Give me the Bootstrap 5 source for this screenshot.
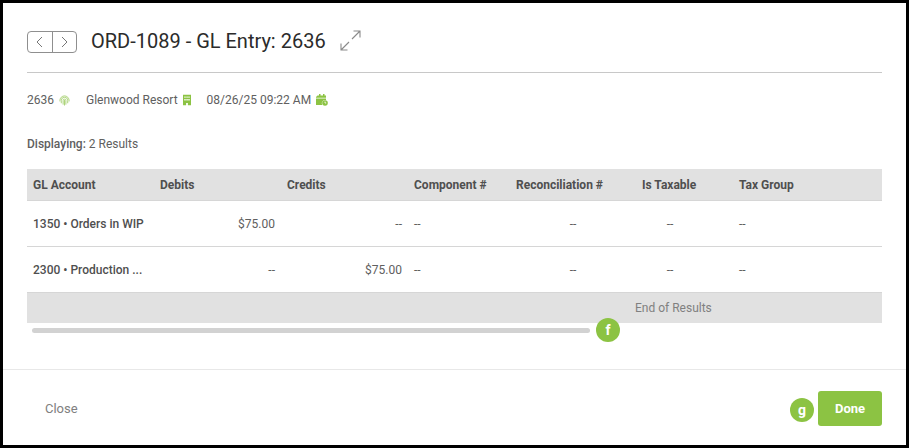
<!DOCTYPE html>
<html lang="en">

<head>
    <meta charset="UTF-8">
    <meta name="viewport" content="width=device-width, initial-scale=1.0">
    <title>GL Entry</title>
    <link rel="stylesheet" href="https://cdn.jsdelivr.net/npm/bootstrap@5.3.0/dist/css/bootstrap.min.css">
    <style>
        html, body {
            height: 448px;
            overflow: hidden;
            background-color: #000;
        }

        body {
            padding: 3px;
            font-family: Roboto, "Liberation Sans", sans-serif;
            font-size: 12px;
            color: #606060;
        }

        .entry-panel {
            position: relative;
            width: 903px;
            height: 442px;
            background-color: #fff;
        }

        .entry-head {
            margin: 0 24px;
            height: 70px;
            padding-top: 28px;
            border-bottom: 1px solid #c8c8c8;
        }

        .pager {
            width: 50px;
            height: 22px;
            border: 1px solid #8f8f8f;
            border-radius: 4px;
        }

        .pager-btn {
            width: 25px;
            border: 0;
            padding: 0;
            background: none;
        }

        .pager-btn + .pager-btn {
            border-left: 1px solid #8f8f8f;
        }

        .entry-title {
            margin: -1px 0 0 14px;
            font-size: 20px;
            font-weight: 400;
            line-height: 22px;
            color: #2b2b2b;
        }

        .expand-icon {
            margin: -1px 0 0 14px;
        }

        .meta-line {
            margin: 19px 24px 0;
            height: 16px;
            line-height: 16px;
        }

        .meta-item svg {
            margin-left: 5px;
        }

        .meta-gap {
            margin-left: 16px;
        }

        .result-count {
            margin: 28px 24px 0;
            line-height: 16px;
        }

        .result-count b {
            font-weight: 500;
        }

        .grid-wrap {
            margin: 17px 24px 0;
            overflow: hidden;
        }

        .gl-grid {
            width: 855px;
            margin: 0;
            table-layout: fixed;
            font-size: 12px;
            color: #606060;
        }

        .gl-grid th, .gl-grid td {
            padding: 1px 6px 0;
            vertical-align: middle;
            white-space: nowrap;
            border-bottom: 1px solid #d6d6d6;
        }

        .gl-grid thead th {
            height: 31px;
            background-color: #e1e1e1;
            font-weight: 700;
            color: #4f4f4f;
        }

        .gl-grid tbody td {
            height: 46px;
        }

        .gl-grid .acct {
            font-weight: 500;
            color: #4f4f4f;
        }

        .gl-grid tfoot td {
            height: 31px;
            padding-left: 608px;
            border: 0;
            background-color: #e1e1e1;
            color: #808080;
        }

        .gl-grid .tax-cell {
            padding-right: 35px;
        }

        .fake-scroll {
            width: 558px;
            height: 5px;
            margin: 5px 0 0 29px;
            border-radius: 3px;
            background-color: #d2d2d2;
        }

        .entry-foot {
            position: absolute;
            left: 0;
            right: 0;
            bottom: 0;
            height: 76px;
            padding: 2px 24px 0 42px;
            border-top: 1px solid #e8e8e8;
        }

        .close-link {
            font-size: 13px;
            color: #808080;
            text-decoration: none;
        }

        .done-btn {
            width: 64px;
            height: 35px;
            padding: 0;
            border: 0;
            border-radius: 3px;
            background-color: #8cc343;
            color: #fff;
            font-size: 13px;
            font-weight: 700;
        }

        .step-dot {
            position: absolute;
            width: 24px;
            height: 24px;
            line-height: 24px;
            border-radius: 50%;
            background-color: #8cc343;
            color: #fff;
            font-size: 14px;
            font-weight: 700;
            text-align: center;
        }

        .dot-f {
            left: 593px;
            top: 315px;
        }

        .dot-g {
            left: 787px;
            top: 395px;
        }
    </style>
</head>

<body>
    <div class="entry-panel">
        <div class="entry-head d-flex align-items-start">
            <div class="pager d-flex">
                <button class="pager-btn d-flex align-items-center justify-content-center" type="button" aria-label="Previous">
                    <svg width="7" height="12" viewBox="0 0 7 12" fill="none" stroke="#777" stroke-width="1"><path d="M6 1 1 6l5 5"/></svg>
                </button>
                <button class="pager-btn d-flex align-items-center justify-content-center" type="button" aria-label="Next">
                    <svg width="7" height="12" viewBox="0 0 7 12" fill="none" stroke="#777" stroke-width="1"><path d="M1 1l5 5-5 5"/></svg>
                </button>
            </div>
            <h1 class="entry-title">ORD-1089 - GL Entry: 2636</h1>
            <svg class="expand-icon" width="21" height="21" viewBox="0 0 21 21" fill="none" stroke="#8a8a8a" stroke-width="1.1"><path d="M12 9 20 1M13.500 1H20v6.500M9 12l-8 8M1 13.500V20h6.500"/></svg>
        </div>

        <div class="meta-line d-flex align-items-center">
            <span class="meta-item d-flex align-items-center">2636
                <svg width="11" height="11" viewBox="0 0 12 12" fill="none" stroke="#a5d070" stroke-width="1"><path d="M1 7V6a5 5 0 0 1 10 0v1M2.500 9V6a3.500 3.500 0 0 1 7 0v3M4.500 10.500V6a1.500 1.500 0 0 1 3 0v4.500M6 5.500V11.500"/></svg>
            </span>
            <span class="meta-item d-flex align-items-center meta-gap">Glenwood Resort
                <svg width="8" height="12" viewBox="0 0 9 12"><path fill="#8cc343" fill-rule="evenodd" d="M0 0h9v12H5.500V9.500h-2V12H0zM1.500 2v1.500h1.500V2zm2.300 0v1.500h1.500V2zM6 2v1.500h1.500V2zM1.500 5v1.500h1.500V5zm2.300 0v1.500h1.500V5zM6 5v1.500h1.500V5z"/></svg>
            </span>
            <span class="meta-item d-flex align-items-center meta-gap">08/26/25 09:22 AM
                <svg width="12" height="12" viewBox="0 0 12 12"><path fill="#8cc343" d="M1.500 1.500h1.500V0h1.500v1.500h2.500V0H8.500v1.500H10v2.200H0V3zM0 4.500h10v1.700A3.300 3.300 0 0 0 6.200 11H0z"/><circle cx="9" cy="9" r="2.800" fill="#8cc343"/><path d="M9 7.500V9h1.200" fill="none" stroke="#fff" stroke-width=".8"/></svg>
            </span>
        </div>

        <div class="result-count"><b>Displaying:</b> 2 Results</div>

        <div class="grid-wrap">
            <table class="table gl-grid">
                <colgroup>
                    <col style="width: 127px">
                    <col style="width: 127px">
                    <col style="width: 127px">
                    <col style="width: 102px">
                    <col style="width: 126px">
                    <col style="width: 97px">
                    <col style="width: 149px">
                </colgroup>
                <thead>
                    <tr>
                        <th>GL Account</th>
                        <th>Debits</th>
                        <th>Credits</th>
                        <th>Component #</th>
                        <th>Reconciliation #</th>
                        <th>Is Taxable</th>
                        <th>Tax Group</th>
                    </tr>
                </thead>
                <tbody>
                    <tr>
                        <td class="acct">1350 • Orders in WIP</td>
                        <td class="text-end">$75.00</td>
                        <td class="text-end">--</td>
                        <td>--</td>
                        <td class="text-center">--</td>
                        <td class="text-center tax-cell">--</td>
                        <td>--</td>
                    </tr>
                    <tr>
                        <td class="acct text-truncate">2300 • Production ...</td>
                        <td class="text-end">--</td>
                        <td class="text-end">$75.00</td>
                        <td>--</td>
                        <td class="text-center">--</td>
                        <td class="text-center tax-cell">--</td>
                        <td>--</td>
                    </tr>
                </tbody>
                <tfoot>
                    <tr>
                        <td colspan="7">End of Results</td>
                    </tr>
                </tfoot>
            </table>
        </div>
        <div class="fake-scroll"></div>

        <div class="entry-foot d-flex align-items-center justify-content-between">
            <a class="close-link" href="#">Close</a>
            <button class="btn done-btn" type="button">Done</button>
        </div>

        <span class="step-dot dot-f">f</span>
        <span class="step-dot dot-g">g</span>
    </div>

    <script src="https://cdn.jsdelivr.net/npm/bootstrap@5.3.0/dist/js/bootstrap.bundle.min.js"></script>
</body>

</html>
